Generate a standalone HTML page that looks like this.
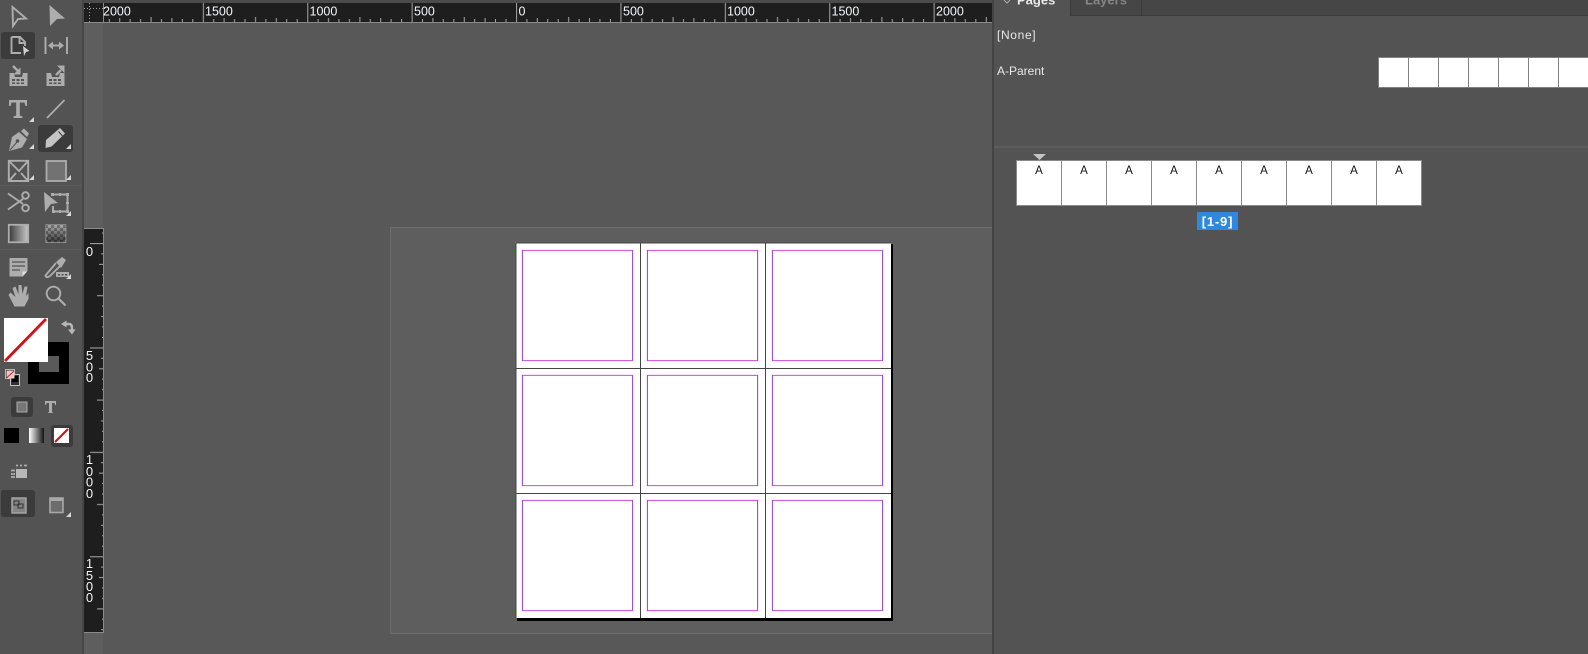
<!DOCTYPE html>
<html><head><meta charset="utf-8"><style>
html,body{margin:0;padding:0;background:#535353;width:1588px;height:654px;overflow:hidden}
svg{position:absolute;left:0;top:0;display:block}
text{font-family:"Liberation Sans",sans-serif}
.r{fill:#f4f6f8;font-size:12.5px}
.v{fill:#f4f6f8;font-size:13px;text-anchor:middle}
.p{fill:#e8e8e8;font-size:12px}
.a{fill:#111;font-size:11.5px;text-anchor:middle}
.i{fill:#adadad}
.s{fill:none;stroke:#adadad;stroke-width:1.900}
.t{fill:#d8d8d8}
</style></head><body>
<svg width="1588" height="654" viewBox="0 0 1588 654" xmlns="http://www.w3.org/2000/svg">
<defs>
<pattern id="hp" patternUnits="userSpaceOnUse" width="104.4" height="30" patternTransform="translate(516 0)">
<path d="M10.9 19V22M21.3 18V22M31.7 19V22M42.2 19V22M52.7 17V22M63.1 19V22M73.5 18V22M83.9 19V22M94.4 19V22" stroke="#a8a8a8" stroke-width="1" fill="none"/>
<path d="M.5 3V22" stroke="#9a9a9a" stroke-width="1.2"/>
</pattern>
<pattern id="vp" patternUnits="userSpaceOnUse" width="30" height="104.4" patternTransform="translate(0 243)">
<path d="M13 10.9H19M11 21.3H19M14 31.7H19M14 42.2H19M9 52.7H19M14 63.1H19M13 73.5H19M14 83.9H19M14 94.4H19" stroke="#a8a8a8" stroke-width="1" fill="none" transform="translate(-2 0)"/>
<path d="M0 .5H19" stroke="#9a9a9a" stroke-width="1.2"/>
</pattern>
<g id="m"><rect x="-.5" y="-.5" width="112" height="112" fill="none" stroke="#f8e8fa"/><rect x=".5" y=".5" width="110" height="110" fill="#fff" stroke="#cf63d9"/><path d="M.5 0V111M110.5 0V111" stroke="#9d52cf"/></g>
<linearGradient id="g1"><stop offset="0" stop-color="#3a3a3a"/><stop offset="1" stop-color="#c8c8c8"/></linearGradient>
<linearGradient id="g2"><stop offset="0" stop-color="#fff"/><stop offset="1" stop-color="#111"/></linearGradient>
<linearGradient id="g3" x2="0" y2="1"><stop offset="0" stop-color="#aaa"/><stop offset="1" stop-color="#3c3c3c"/></linearGradient>
<pattern id="ck" patternUnits="userSpaceOnUse" width="6" height="6"><rect width="3" height="3" fill="#000" opacity=".3"/><rect x="3" y="3" width="3" height="3" fill="#000" opacity=".3"/></pattern>
</defs>

<!-- base -->
<rect width="1588" height="654" fill="#535353"/>
<rect x="82" y="0" width="2" height="654" fill="#464646"/>
<rect x="84" y="0" width="908" height="654" fill="#585858"/>
<rect x="84" y="22" width="19" height="632" fill="#5e5e5e"/>
<rect x="84" y="0" width="908" height="3" fill="#4c4c4c"/>

<!-- pasteboard -->
<rect x="390.5" y="227.5" width="603" height="406" fill="#5e5e5e" stroke="#6e6e6e"/>

<!-- page -->
<rect x="517" y="244" width="376" height="377" fill="#000"/>
<rect x="515.500" y="242.500" width="375.500" height="375.500" fill="#fff"/>
<path d="M516 243V618M640.5 243V618M765.5 243V618M516 243H891M516 368.5H891M516 493.5H891" stroke="#444" stroke-width="1" fill="none"/>
<use href="#m" x="522" y="250"/><use href="#m" x="647" y="250"/><use href="#m" x="772" y="250"/>
<use href="#m" x="522" y="375"/><use href="#m" x="647" y="375"/><use href="#m" x="772" y="375"/>
<use href="#m" x="522" y="500"/><use href="#m" x="647" y="500"/><use href="#m" x="772" y="500"/>

<!-- h ruler -->
<rect x="84" y="3" width="908" height="19" fill="#1e1e1e"/>
<rect x="84" y="3" width="908" height="20" fill="url(#hp)"/>
<rect x="84" y="22" width="908" height="1" fill="#8a8a8a"/>
<text class="r" x="205" y="15.500">1500</text>
<text class="r" x="309.500" y="15.500">1000</text>
<text class="r" x="414" y="15.500">500</text>
<text class="r" x="518.500" y="15.500">0</text>
<text class="r" x="623" y="15.500">500</text>
<text class="r" x="727" y="15.500">1000</text>
<text class="r" x="831.500" y="15.500">1500</text>
<text class="r" x="936" y="15.500">2000</text>
<!-- corner -->
<rect x="84" y="3" width="19" height="19" fill="#1e1e1e"/>
<path d="M84 8.500H103M89.500 3V22" stroke="#a0a0a0" stroke-dasharray="1 2" fill="none"/>
<path d="M103.500 3V22" stroke="#8a8a8a"/>
<text class="r" x="103" y="15.500">2000</text>

<!-- v ruler -->
<rect x="84" y="228" width="19" height="404" fill="#1e1e1e"/>
<rect x="84" y="228" width="19" height="404" fill="url(#vp)"/>
<rect x="84" y="228" width="20" height="1" fill="#8a8a8a"/>
<rect x="84" y="632" width="20" height="1" fill="#8a8a8a"/>
<rect x="103" y="228" width="1" height="405" fill="#8a8a8a"/>
<text class="v" x="89.500" y="256">0</text>
<text class="v" x="89.500" y="360">5</text><text class="v" x="89.500" y="371.500">0</text><text class="v" x="89.500" y="382">0</text>
<text class="v" x="89.500" y="464">1</text><text class="v" x="89.500" y="476">0</text><text class="v" x="89.500" y="486.500">0</text><text class="v" x="89.500" y="498">0</text>
<text class="v" x="89.500" y="568">1</text><text class="v" x="89.500" y="580">5</text><text class="v" x="89.500" y="591">0</text><text class="v" x="89.500" y="602">0</text>

<!-- right panel -->
<rect x="992" y="0" width="596" height="654" fill="#535353"/>
<rect x="992" y="0" width="2" height="654" fill="#444"/>
<rect x="994" y="0" width="594" height="15" fill="#464646"/>
<rect x="994" y="15" width="594" height="1" fill="#3c3c3c"/>
<rect x="994" y="0" width="76" height="16" fill="#535353"/>
<rect x="1070" y="0" width="1" height="16" fill="#3a3a3a"/>
<rect x="1141" y="0" width="1" height="15" fill="#3a3a3a"/>
<path d="M1004 0L1007 3L1010 0" stroke="#aaa" fill="none"/>
<text x="1017" y="4.500" font-size="13" font-weight="700" fill="#e8e8e8">Pages</text>
<text x="1085" y="4.500" font-size="13" font-weight="700" fill="#858585">Layers</text>
<text class="p" x="997" y="39" letter-spacing=".65">[None]</text>
<text class="p" x="997" y="75">A-Parent</text>
<rect x="1378" y="57" width="210" height="31" fill="#808080"/>
<path d="M1379 58h29v29h-29zM1409 58h29v29h-29zM1439 58h29v29h-29zM1469 58h29v29h-29zM1499 58h29v29h-29zM1529 58h29v29h-29zM1559 58h29v29h-29z" fill="#fff"/>
<rect x="994" y="146" width="594" height="2" fill="#5c5c5c"/>
<path d="M1033 154H1046L1039.500 160Z" fill="#c4c4c4"/>
<rect x="1016" y="160" width="406" height="46" fill="#8a8a8a"/>
<path d="M1017 161h44v44h-44zM1062 161h44v44h-44zM1107 161h44v44h-44zM1152 161h44v44h-44zM1197 161h44v44h-44zM1242 161h44v44h-44zM1287 161h44v44h-44zM1332 161h44v44h-44zM1377 161h44v44h-44z" fill="#fff"/>
<text class="a" x="1039" y="174">A</text><text class="a" x="1084" y="174">A</text><text class="a" x="1129" y="174">A</text><text class="a" x="1174" y="174">A</text><text class="a" x="1219" y="174">A</text><text class="a" x="1264" y="174">A</text><text class="a" x="1309" y="174">A</text><text class="a" x="1354" y="174">A</text><text class="a" x="1399" y="174">A</text>
<rect x="1197" y="212" width="41" height="18" fill="#2f87df"/>
<text x="1217.500" y="226" font-size="13" font-weight="700" fill="#fff" text-anchor="middle" letter-spacing=".8">[1-9]</text>

<!-- TOOLBAR -->
<rect x="1" y="32" width="34" height="27" rx="3" fill="#3b3b3b"/>
<rect x="38" y="125" width="35" height="27" rx="3" fill="#3b3b3b"/>
<rect x="0" y="185" width="82" height="1" fill="#5c5c5c"/>
<rect x="0" y="249" width="82" height="1" fill="#5c5c5c"/>

<path class="s" d="M12.500 7L26 18.500L18 19L13 26Z"/>
<path class="i" d="M49.500 5L65 18.500L57 19L50 26Z"/>

<!-- page tool -->
<path class="s" d="M11.500 37H20L25 42V46M21 53H11.500V37M19.500 37.500V43H25"/>
<path d="M23 46L29.500 51L26 52L24 56Z" fill="#d0d0d0"/>
<!-- gap tool -->
<path class="s" stroke-width="2.400" d="M45.500 37V54M67 37V54"/>
<path d="M50 45.500H62" stroke="#adadad" stroke-width="2"/>
<path class="i" d="M48 45.500L53 41.500V49.500ZM64 45.500L59 41.500V49.500Z"/>

<!-- content collector -->
<path class="i" d="M9.500 73H14L15 77H22L23 73H27.500V86H9.500Z"/>
<path d="M12 79h3v2h-3zM16.500 79h3v2h-3zM21 79h3v2h-3zM12 82.500h3v1.500h-3zM16.500 82.500h3v1.500h-3zM21 82.500h3v1.500h-3z" fill="#535353"/>
<path d="M13 66L18 71" stroke="#adadad" stroke-width="2.400"/><path class="i" d="M20.500 67.500V74.500H13.500Z"/>
<path class="i" d="M46.500 73H51L52 77H59L60 73H64.500V86H46.500Z"/>
<path d="M49 79h3v2h-3zM53.500 79h3v2h-3zM58 79h3v2h-3zM49 82.500h3v1.500h-3zM53.500 82.500h3v1.500h-3zM58 82.500h3v1.500h-3z" fill="#535353"/>
<path d="M56 75L61 70" stroke="#adadad" stroke-width="2.400"/><path class="i" d="M57 65.500H64.500V73Z"/>

<!-- type -->
<path class="i" d="M9 100H27V106H25.500L24.500 102.500H19.800V115.500L22.500 116.500V118H13.500V116.500L16.200 115.500V102.500H11.500L10.500 106H9Z"/>
<path class="t" d="M34 117V122H29Z"/>
<path d="M47 118L64.500 100" stroke="#adadad" stroke-width="1.800"/>

<!-- pen -->
<path class="i" d="M19 132L27 139L22 147.500L9 151L12 137Z"/>
<path d="M10 150L17 142" stroke="#535353" stroke-width="1"/><circle cx="17.500" cy="141" r="1.800" fill="#535353"/>
<path d="M21 131L24 128.500L29 133.500L27 137Z" fill="#adadad"/>
<path class="t" d="M34 144V149H29Z"/>
<!-- pencil -->
<path d="M46 140L60 128L65 133.500L51.500 146.500L45.500 148Z" fill="#c4c4c4"/>
<path d="M58.500 131.500L62.500 136" stroke="#3b3b3b" stroke-width="1"/>
<path class="t" d="M71 144V149H66Z"/>

<!-- frames -->
<path class="s" d="M8.800 160.800H28.200V181H8.800ZM9 161L19 171L28 161M9 181L16 173M28 181L21 173"/>
<path class="t" d="M34 175V180H29Z"/>
<rect x="46.500" y="161" width="19.500" height="20" fill="#727272" stroke="#adadad" stroke-width="1.800"/>
<path class="t" d="M71 175V180H66Z"/>

<!-- scissors -->
<path class="s" d="M8 193.500L23 204M8 209.500L23 199" stroke-width="2.200"/>
<circle cx="25.500" cy="195.500" r="3.300" class="s"/><circle cx="25.500" cy="208" r="3.300" class="s"/>
<!-- free transform -->
<path class="i" d="M44 192L58 203L51 204L45 212Z"/>
<path class="s" d="M52 194.500H67.500V211.500H53V206" stroke-width="1.300"/>
<path class="i" d="M51 193h3v3h-3zM66 193h3v3h-3zM66 210h3v3h-3zM52 210h3v3h-3zM59 193h2v3h-2zM59 210h2v3h-2zM66 202h3v2h-3z"/>
<path class="t" d="M71 211V216H66Z"/>

<!-- gradient -->
<rect x="8.800" y="224.800" width="19.400" height="17.500" fill="url(#g1)" stroke="#adadad" stroke-width="1.800"/>
<rect x="46" y="224.800" width="19.800" height="17.500" fill="url(#g3)" stroke="#a0a0a0"/>
<rect x="46" y="224.800" width="19.800" height="17.500" fill="url(#ck)"/>

<!-- note -->
<path class="i" d="M9.500 258H27.500V271L23 276.500H9.500Z"/>
<path d="M12 262H25M12 266H25M12 270H20" stroke="#535353" stroke-width="1.300"/>
<path d="M22.500 276L27 271.500H22.500Z" fill="#e0e0e0"/>
<!-- eyedropper -->
<path class="s" d="M60 266L50 276Q46 278.500 45.500 275.500L56 263" stroke-width="1.600"/>
<path class="i" d="M56 262L62 257L66 260L61 268Z"/>
<rect x="56" y="272" width="13" height="5" fill="#adadad"/>
<path d="M58 274h2v1.500h-2zM61.500 274h2v1.500h-2zM65 274h2v1.500h-2z" fill="#535353"/>
<path class="t" d="M71 274V279H66Z"/>

<!-- hand -->
<path class="i" d="M8.500 295L10.500 292.500L15.500 297L12.500 288L15.500 286.500L18.500 294.500L18.500 285H21.500L22.500 294L24.500 286.500H27.500L26 296L28.500 293V299L24.500 306.500H14.500Z"/>
<!-- zoom -->
<circle cx="53.500" cy="293.500" r="6.800" class="s" stroke-width="1.400"/>
<path d="M58.500 298.500L65.500 305.500" stroke="#adadad" stroke-width="2.200"/>

<!-- fill/stroke -->
<path d="M28 342H69V384H28ZM39 356V372H59V356Z" fill="#000" fill-rule="evenodd"/>
<rect x="39" y="356" width="20" height="16" fill="#5a5a5a"/>
<rect x="4" y="318" width="44" height="44" fill="#fff"/>
<path d="M5 361L46 319" stroke="#d40f16" stroke-width="2.800"/>
<!-- swap -->
<path d="M65 324H69Q72 324 72 328V331" fill="none" stroke="#b8b8b8" stroke-width="2.400"/>
<path d="M61 324L66.500 320.500V327.500ZM68 329.500H75.500L72 334.500Z" fill="#b8b8b8"/>
<!-- default -->
<rect x="5.500" y="369.500" width="9" height="9" fill="#222" stroke="#b8b8b8"/>
<rect x="10.500" y="374.500" width="9" height="11" fill="#333" stroke="#c0c0c0"/>
<rect x="12" y="376" width="6" height="6" fill="#000"/>
<rect x="6.500" y="370.500" width="8" height="8" fill="#eac8c8"/>
<path d="M6.500 378L14 371" stroke="#d02020"/>

<!-- formatting -->
<rect x="11" y="397" width="22" height="20" rx="3" fill="#3b3b3b"/>
<rect x="17" y="402" width="10" height="10" fill="#777" stroke="#a8a8a8"/>
<path class="i" d="M45 401H56V405H55L54.500 403H52V412L53.500 413H47.500L49 412V403H46.500L46 405H45Z"/>

<!-- apply -->
<rect x="4" y="428" width="15" height="15" fill="#000"/>
<rect x="29" y="428" width="15" height="15" fill="url(#g2)"/>
<rect x="51" y="425" width="22" height="22" rx="3" fill="#3b3b3b"/>
<rect x="54" y="428" width="15" height="15" fill="#fff"/>
<path d="M55 442L68 429" stroke="#d40f16" stroke-width="2"/>

<!-- view -->
<rect x="16" y="469" width="11" height="9" fill="#b8b8b8"/>
<path d="M11 470.500h4M11 474h4M11 477h4M16 465.500h2M20 465.500h2M24 465.500h3" stroke="#adadad" stroke-width="1.800" fill="none"/>

<!-- screen mode -->
<rect x="1" y="490" width="34" height="27" rx="3" fill="#3b3b3b"/>
<rect x="12" y="498" width="14" height="15" fill="#858585" stroke="#a8a8a8" stroke-width="1.400"/>
<rect x="14" y="501" width="5" height="4" fill="none" stroke="#333"/><rect x="18" y="504" width="5" height="4" fill="none" stroke="#333"/>
<rect x="50" y="498" width="13" height="14.500" fill="#6c6c6c" stroke="#a8a8a8" stroke-width="1.600"/>
<rect x="50" y="498" width="13" height="3" fill="#a8a8a8"/>
<path class="t" d="M71 512V517H66Z"/>
</svg>
</body></html>
